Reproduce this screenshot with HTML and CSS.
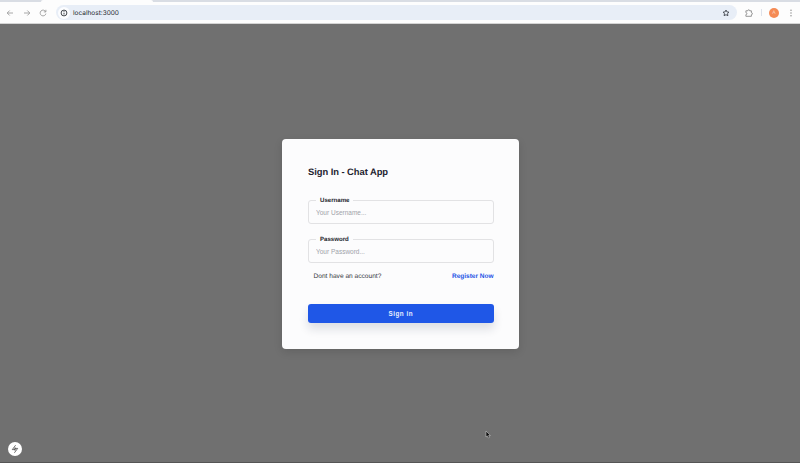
FILE: index.html
```html
<!DOCTYPE html>
<html lang="en">
<head>
<meta charset="utf-8">
<title>Chat App</title>
<link rel="stylesheet" href="styles.css">
</head>
<body>
<div class="tabs"><div class="tab"></div></div>
<header class="toolbar">
  <svg class="nav" viewBox="0 0 8 8"><path d="M7 4H1.4M3.7 1.5 1.2 4l2.5 2.5"/></svg>
  <svg class="nav" viewBox="0 0 8 8"><path d="M1 4h5.6M4.3 1.5 6.8 4 4.3 6.5"/></svg>
  <svg class="nav" viewBox="0 0 8 8"><path d="M6.6 2.6A2.9 2.9 0 1 0 6.9 4.6M6.9.8v2.1H4.8"/></svg>
  <div class="address">
    <span class="info"><svg viewBox="0 0 8 8"><circle cx="4" cy="4" r="2.9"/><path d="M4 3.7v1.8M4 2.2v.8"/></svg></span>
    <span class="url">localhost:3000</span>
    <svg class="star" viewBox="0 0 8 8"><path d="m4 1 .9 1.9 2.1.3-1.5 1.4.4 2.1L4 5.7 2.1 6.7l.4-2.1L1 3.2l2.1-.3z"/></svg>
  </div>
  <svg class="puzzle" viewBox="0 0 8 8"><path d="M.9 1.8h1.8a1 1 0 0 1 2 0h1.7v1.9a1 1 0 0 1 0 2v1.6H.9V5.6a1 1 0 0 0 0-2z"/></svg>
  <span class="divider"></span>
  <span class="avatar">A</span>
  <svg class="menu" viewBox="0 0 2 8"><circle cx="1" cy="1.3" r=".7"/><circle cx="1" cy="4" r=".7"/><circle cx="1" cy="6.7" r=".7"/></svg>
</header>
<main class="page">
  <form class="card">
    <h1 class="title">Sign In - Chat App</h1>
    <label class="field"><span class="label">Username</span><input class="input" type="text" placeholder="Your Username..."></label>
    <label class="field"><span class="label">Password</span><input class="input" type="password" placeholder="Your Password..."></label>
    <div class="row"><span class="question">Dont have an account?</span><a class="register">Register Now</a></div>
    <button class="submit" type="button">Sign in</button>
  </form>
  <div class="badge"><svg viewBox="0 0 10 10"><path d="M5.6 1.2 2.3 5.6H5V3.4M5 6.6V4.4h2.7L4.4 8.8"/></svg></div>
  <svg class="cursor" viewBox="0 0 7 9"><path d="M1 1v6l1.4-1.1.9 2 1.2-.5-.9-1.9h1.8z"/></svg>
</main>
</body>
</html>
```
FILE: styles.css
```css
* { box-sizing: border-box; }
body {
  margin: 0;
  height: 463px;
  display: flex;
  flex-direction: column;
  overflow: hidden;
  background: #707070;
  font-family: "Liberation Sans", Arial, sans-serif;
  text-rendering: geometricPrecision;
}
svg { display: block; fill: none; flex: none; }
.tabs { height: 2px; background: #d9dde4; padding-left: 41px; flex: none; }
.tab { width: 112px; height: 2px; background: #fdfdfd; border-radius: 2px 2px 0 0; }
.toolbar {
  height: 22px;
  flex: none;
  display: flex;
  align-items: center;
  padding: 0 7px 0 6px;
  background: #fdfdfd;
  border-bottom: 1px solid #d4d4d4;
}
.nav { width: 8px; height: 8px; margin-right: 8.5px; stroke: #929292; stroke-width: .8; }
.address {
  width: 681px;
  height: 15px;
  margin-left: .5px;
  display: flex;
  align-items: center;
  border-radius: 8px;
  background: #e8eef7;
  padding: 0 7px 0 2px;
}
.info { width: 12px; height: 12px; border-radius: 50%; background: #fcfdff; display: grid; place-items: center; }
.info svg { width: 8px; height: 8px; stroke: #30343a; stroke-width: .9; }
.url { margin-left: 3px; font: 6.5px/10px Inter, sans-serif; color: #26292e; white-space: nowrap; }
.star { width: 8px; height: 8px; margin-left: auto; stroke: #3e434b; stroke-width: .9; }
.puzzle { width: 8px; height: 8px; margin-left: 8px; stroke: #8c8c8c; stroke-width: .9; }
.divider { width: 1px; height: 7px; margin: 0 7px 0 8px; background: #dde2eb; }
.avatar {
  width: 10px;
  height: 10px;
  border-radius: 50%;
  background: #f58b55;
  color: #fbd9c6;
  font-size: 5px;
  line-height: 10px;
  text-align: center;
}
.menu { width: 2px; height: 8px; margin-left: auto; margin-right: 1px; fill: #858585; }
.page { flex: 1; position: relative; display: flex; justify-content: center; align-items: flex-start; padding: 115px 0 0 1px; border-bottom: 1px solid #555; }
.card {
  width: 237px;
  height: 209.5px;
  padding: 25px 25.5px 0 26px;
  border-radius: 4px;
  background: #fcfcfd;
  box-shadow: 0 3px 8px rgba(0, 0, 0, .12);
}
.title { margin: 0; font-size: 9.4px; line-height: 15px; font-weight: 700; letter-spacing: -.05px; color: #1f2430; white-space: nowrap; }
.field { display: block; position: relative; height: 24px; margin-top: 21px; }
.field + .field { margin-top: 15px; }
.label {
  position: absolute;
  top: -5px;
  left: 8px;
  padding: 0 4px;
  background: #fcfcfd;
  font-size: 6.1px;
  line-height: 11px;
  font-weight: 700;
  color: #24262c;
}
.input {
  display: block;
  width: 100%;
  height: 24px;
  padding: 0 7px;
  border: 1px solid #e2e2e4;
  border-radius: 3px;
  background: none;
  font: 6.5px "Liberation Sans", Arial, sans-serif;
  outline: 0;
}
.input::placeholder { color: #a0a3aa; opacity: 1; }
.row { display: flex; justify-content: space-between; margin-top: 9px; padding-left: 5.5px; line-height: 10px; white-space: nowrap; }
.question { font-size: 6.6px; color: #35373d; }
.register { font-size: 6.5px; font-weight: 700; color: #1f55e6; }
.submit {
  display: block;
  width: 100%;
  height: 18.5px;
  margin-top: 22px;
  padding: 0;
  border: 0;
  border-radius: 3px;
  background: #1f57e7;
  color: #e9effd;
  font: 700 6.3px "Liberation Sans", Arial, sans-serif;
  letter-spacing: .5px;
  box-shadow: 0 6px 10px rgba(30, 40, 70, .14);
}
.badge {
  position: absolute;
  left: 8px;
  bottom: 6px;
  width: 14px;
  height: 14px;
  border-radius: 50%;
  background: #fff;
  display: grid;
  place-items: center;
}
.badge svg { width: 10px; height: 10px; stroke: #4a4a4a; stroke-width: .8; }
.cursor { position: absolute; left: 485px; top: 406px; width: 7px; height: 9px; fill: #0b0b0b; stroke: #c8c8c8; stroke-width: .6; }
```
